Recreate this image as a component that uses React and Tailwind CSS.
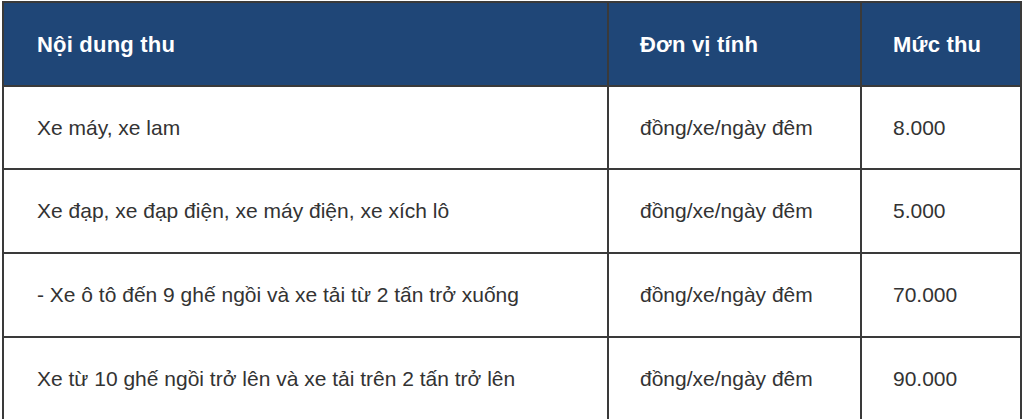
export default function App() {
  const rows = [
    ['Xe máy, xe lam', 'đồng/xe/ngày đêm', '8.000'],
    ['Xe đạp, xe đạp điện, xe máy điện, xe xích lô', 'đồng/xe/ngày đêm', '5.000'],
    ['- Xe ô tô đến 9 ghế ngồi và xe tải từ 2 tấn trở xuống', 'đồng/xe/ngày đêm', '70.000'],
    ['Xe từ 10 ghế ngồi trở lên và xe tải trên 2 tấn trở lên', 'đồng/xe/ngày đêm', '90.000'],
  ];

  return (
    <div className="min-h-[419px] bg-white pt-px pl-[2px] overflow-hidden" style={{ fontFamily: '"Liberation Sans", Arial, sans-serif' }}>
      <table className="w-[1018px] border-collapse table-fixed">
        <colgroup>
          <col className="w-[605px]" />
          <col className="w-[253px]" />
          <col className="w-[160px]" />
        </colgroup>
        <thead>
          <tr className="h-[84px] bg-[#1f4677] text-white text-[22px] font-bold text-left tracking-[0.2px]">
            <th className="border-2 border-[#3a3a3a] pl-[33px]">Nội dung thu</th>
            <th className="border-2 border-[#3a3a3a] pl-[31px]">Đơn vị tính</th>
            <th className="border-2 border-[#3a3a3a] pl-[31px]">Mức thu</th>
          </tr>
        </thead>
        <tbody>
          {rows.map((r, i) => (
            <tr key={r[0]} className={(i === 0 ? 'h-[83px]' : 'h-[84px]') + ' text-[21px] text-[#333]'}>
              <td className="border-2 border-[#3a3a3a] pl-[33px]">{r[0]}</td>
              <td className="border-2 border-[#3a3a3a] pl-[31px]">{r[1]}</td>
              <td className="border-2 border-[#3a3a3a] pl-[31px]">{r[2]}</td>
            </tr>
          ))}
        </tbody>
      </table>
    </div>
  );
}
